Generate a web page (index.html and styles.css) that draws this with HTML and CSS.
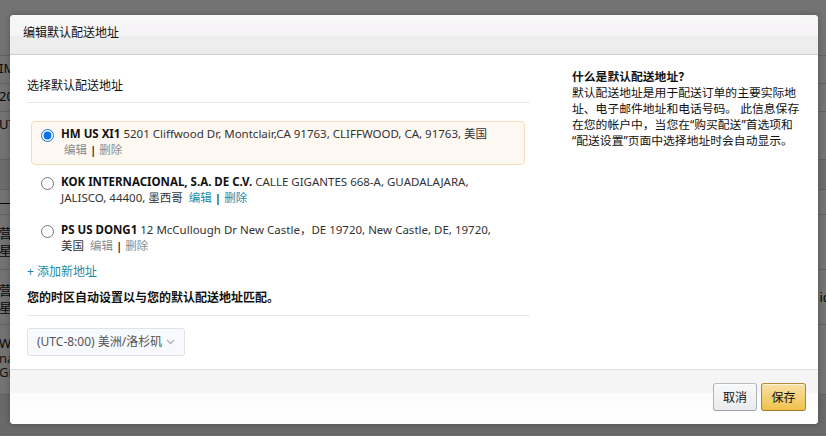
FILE: index.html
```html
<!DOCTYPE html>
<html lang="zh-CN">
<head>
<meta charset="utf-8">
<title>编辑默认配送地址</title>
<link rel="stylesheet" href="styles.css">
</head>
<body>
<div class="page">
  <div class="row r1"></div>
  <div class="row r2"><span>IM</span></div>
  <div class="row r3"><span>20</span></div>
  <div class="row r4"><span>UT</span></div>
  <div class="row r5 band"></div>
  <div class="row r6"><span>一</span></div>
  <div class="row r7"><span>营<br>星</span></div>
  <div class="row r8"><span>营<br>星</span><span class="right">ic</span></div>
  <div class="row r9"><span class="strong">We</span><span class="sub">na</span><span class="sub">Gr</span></div>
  <div class="row r10"></div>
</div>
<div class="backdrop"></div>

<div class="modal">
  <header class="modal-header">
    <h4 class="modal-title">编辑默认配送地址</h4>
  </header>
  <div class="modal-body">
    <div class="col-main">
      <h5 class="section-title">选择默认配送地址</h5>
      <ul class="addr-list">
        <li class="addr selected">
          <label class="addr-label">
            <input type="radio" name="addr" checked>
            <span class="addr-text"><b>HM US XI1</b> 5201 Cliffwood Dr, Montclair,CA 91763, CLIFFWOOD, CA, 91763, 美国 <span class="actions grey"><a>编辑</a> <span class="sep">|</span> <a>删除</a></span></span>
          </label>
        </li>
        <li class="addr">
          <label class="addr-label">
            <input type="radio" name="addr">
            <span class="addr-text"><b>KOK INTERNACIONAL, S.A. DE C.V.</b> CALLE GIGANTES 668-A, GUADALAJARA, JALISCO, 44400, 墨西哥 <span class="actions teal"><a>编辑</a> <span class="sep">|</span> <a>删除</a></span></span>
          </label>
        </li>
        <li class="addr">
          <label class="addr-label">
            <input type="radio" name="addr">
            <span class="addr-text"><b>PS US DONG1</b> 12 McCullough Dr New Castle，DE 19720, New Castle, DE, 19720, 美国 <span class="actions grey"><a>编辑</a> <span class="sep">|</span> <a>删除</a></span></span>
          </label>
        </li>
      </ul>
      <a class="add-link">+ 添加新地址</a>
      <p class="tz-note">您的时区自动设置以与您的默认配送地址匹配。</p>
      <div class="tz-select">
        <span class="tz-value">(UTC-8:00) 美洲/洛杉矶</span>
        <svg class="chev" width="9" height="6" viewBox="0 0 9 6"><path d="M1 1l3.5 3.5L8 1" fill="none" stroke="#b5b5b5" stroke-width="1.3"/></svg>
      </div>
    </div>
    <aside class="col-help">
      <h5 class="help-title">什么是默认配送地址<span class="qmark">？</span></h5>
      <p class="help-text">默认配送地址是用于配送订单的主要实际地址、电子邮件地址和电话号码。 此信息保存在您的帐户中，当您在“购买配送”首选项和“配送设置”页面中选择地址时会自动显示。</p>
    </aside>
  </div>
  <footer class="modal-footer">
    <button class="btn">取消</button>
    <button class="btn btn-primary">保存</button>
  </footer>
</div>
</body>
</html>
```

FILE: styles.css
```css
* { box-sizing: border-box; }
html, body { margin: 0; padding: 0; }
body {
  width: 826px;
  height: 436px;
  overflow: hidden;
  position: relative;
  background: #fff;
  font-family: "Noto Sans", "Noto Sans CJK SC", sans-serif;
  font-size: 12px;
  color: #111;
}

/* background page */
.page { position: relative; }
.row {
  border-bottom: 1px solid #d8d8d8;
  font-size: 13px;
  line-height: 16px;
  color: #111;
  position: relative;
}
.row span { display: block; margin-left: -1px; }
.r1 { height: 56px; }
.r2 { height: 28px; padding-top: 4px; }
.r3 { height: 28px; padding-top: 4px; }
.r4 { height: 48px; padding-top: 4px; }
.r5 { height: 30px; background: #f0f0f0; }
.r6 { height: 25px; padding-top: 5px; }
.r7 { height: 55px; padding-top: 10px; line-height: 17px; }
.r8 { height: 55px; padding-top: 12px; line-height: 17px; }
.r8 .right { position: absolute; right: -3px; top: 19px; }
.r9 { height: 70px; padding-top: 10px; }
.r9 .sub { color: #333; line-height: 14px; }
.r10 { height: 40px; background: #e8e8e8; }

.backdrop {
  position: absolute;
  inset: 0;
  background: rgba(0, 0, 0, 0.55);
}

/* modal */
.modal {
  position: absolute;
  left: 10px;
  top: 15px;
  width: 808px;
  height: 409px;
  background: #fff;
  border-radius: 4px;
  box-shadow: 0 0 6px rgba(0, 0, 0, 0.25);
  display: flex;
  flex-direction: column;
  overflow: hidden;
}
.modal-header {
  height: 40px;
  flex: none;
  border-bottom: 1px solid #cdcdcd;
  background: linear-gradient(#f7f7f7 0, #f6f3f6 52%, #eeeeee 55%, #ececec 100%);
  padding: 10px 13px 0;
}
.modal-title {
  margin: 0;
  font-size: 12px;
  font-weight: 400;
  line-height: 16px;
  color: #111;
}

.modal-body {
  flex: 1;
  display: flex;
  padding: 0 18px 0 17px;
}
.col-main {
  width: 503px;
  flex: none;
  padding-top: 23px;
}
.section-title {
  margin: 0;
  font-size: 12px;
  font-weight: 400;
  line-height: 16px;
  padding-bottom: 8px;
  border-bottom: 1px solid #e7e7e7;
}
.addr-list {
  list-style: none;
  margin: 18px 0 0;
  padding: 0;
}
.addr {
  margin: 0 5px 4px 4px;
  padding: 4px 20px 6px 9px;
  border: 1px solid transparent;
  border-radius: 4px;
}
.addr.selected {
  background: #fef8f2;
  border-color: #f9dcbc;
}
.addr-label {
  display: flex;
  align-items: flex-start;
}
.addr-label input {
  margin: 3px 7px 0 0;
  width: 13px;
  height: 13px;
  flex: none;
  accent-color: #0a72e8;
}
.addr-text {
  font-size: 11.5px;
  line-height: 16px;
  color: #333;
  width: 442px;
}
.addr-text b { color: #111; font-weight: 700; }
.actions { margin-left: 3px; }
.actions a { cursor: pointer; }
.actions.grey a { color: #8a8a8a; }
.actions.teal a { color: #1b8aa6; }
.actions .sep { color: #222; font-weight: 600; }

.add-link {
  display: block;
  color: #1b8aa6;
  line-height: 16px;
  margin-top: -1px;
}
.tz-note {
  margin: 10px 0 0;
  font-weight: 700;
  line-height: 16px;
  padding-bottom: 9px;
  border-bottom: 1px solid #e7e7e7;
  color: #111;
}
.tz-select {
  margin-top: 12px;
  width: 158px;
  height: 28px;
  border: 1px solid #dfe2e6;
  border-radius: 3px;
  background: #f7f9fc;
  display: flex;
  align-items: center;
  padding: 0 9px 0 9px;
  justify-content: space-between;
}
.tz-value { color: #555; line-height: 16px; }
.chev { flex: none; }

.col-help {
  width: 230px;
  margin-left: 42px;
  padding-top: 13px;
  font-size: 11.8px;
}
.help-title {
  margin: 0;
  font-size: 11.8px;
  font-weight: 700;
  line-height: 16px;
}
.qmark { font-family: "Noto Sans CJK TC", sans-serif; }
.help-text {
  margin: 0;
  line-height: 16px;
  color: #111;
}

.modal-footer {
  height: 55px;
  flex: none;
  border-top: 1px solid #dedede;
  background: linear-gradient(#f5f5f5 0, #f5f5f5 41%, #fdfbfd 43%, #fff 100%);
  display: flex;
  justify-content: flex-end;
  align-items: flex-start;
  gap: 4px;
  padding: 13px 12px 0 0;
}
.btn {
  height: 28px;
  padding: 0 9px;
  font: inherit;
  font-size: 12px;
  color: #111;
  border: 1px solid #adb1b8;
  border-color: #b9bcc2 #adb1b8 #a2a6ac;
  border-radius: 3px;
  background: linear-gradient(#f8f9fb, #e9ebee);
  box-shadow: inset 0 1px 0 rgba(255,255,255,.6);
}
.btn-primary {
  border-color: #b38d3a #a88734 #9c7e31;
  background: linear-gradient(#f8e2a8, #f0c14b);
  width: 45px;
}
```
